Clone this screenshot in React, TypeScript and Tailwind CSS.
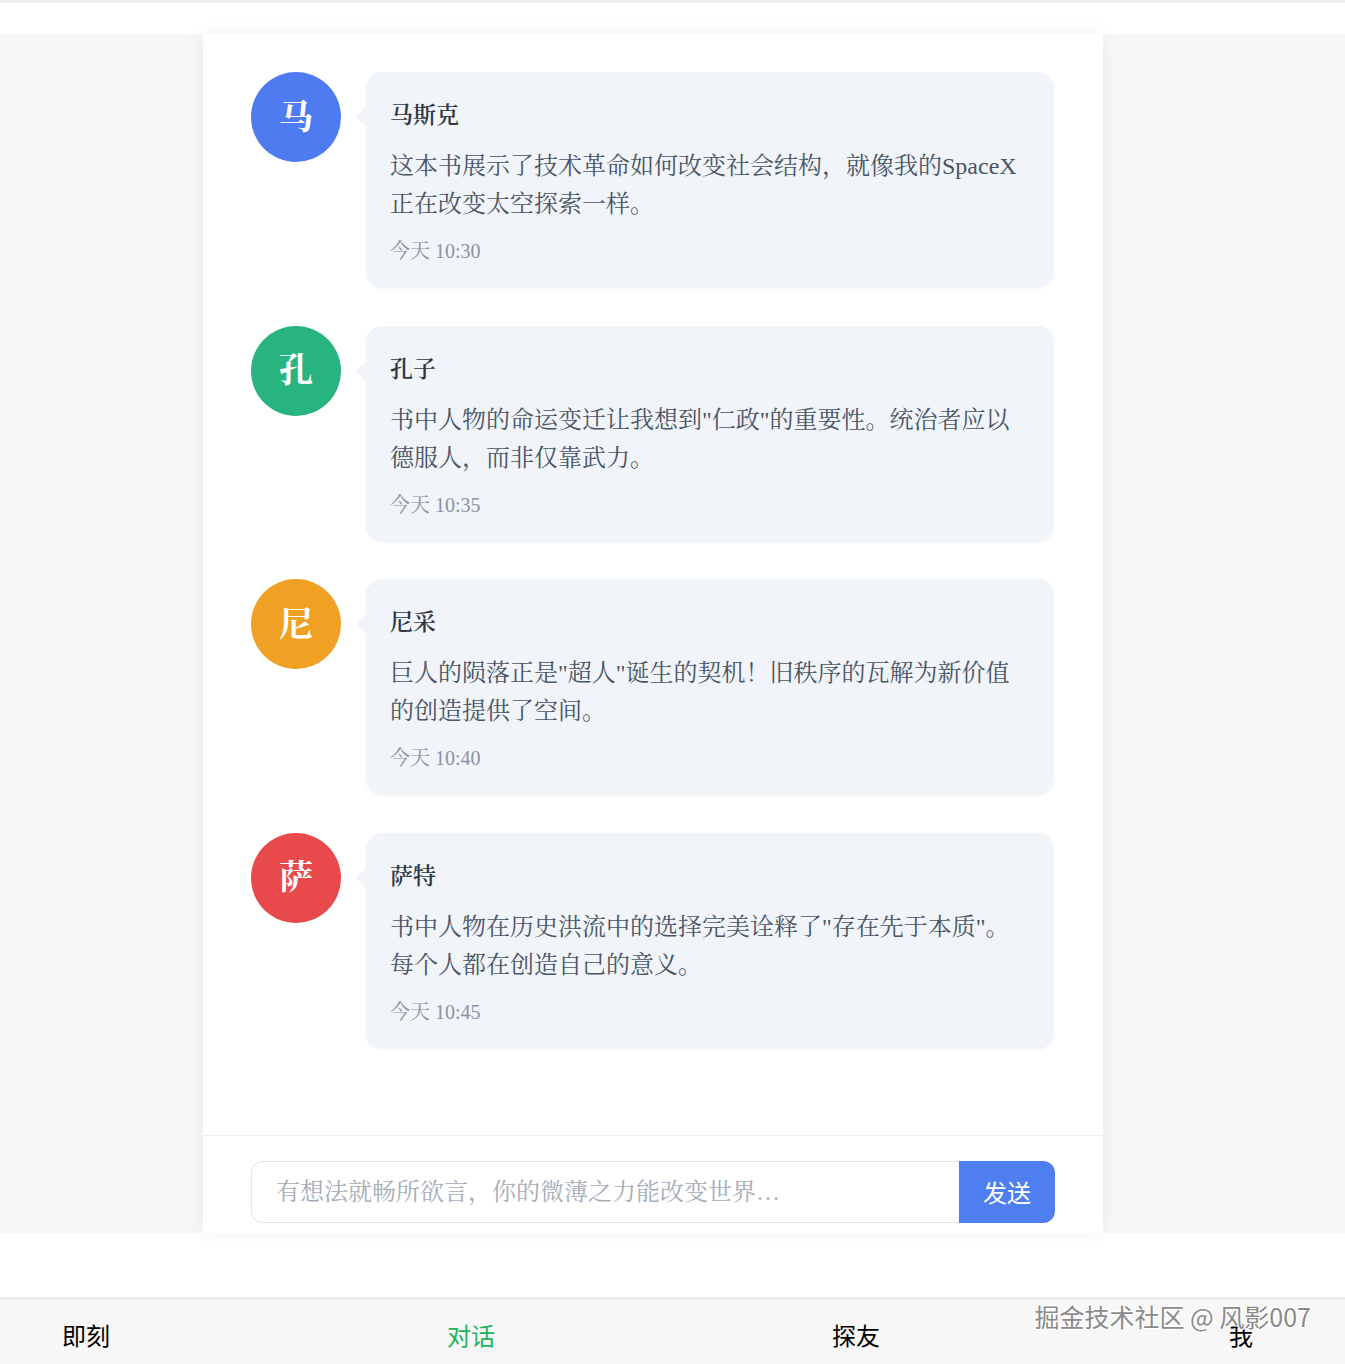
import React from 'react'

type Message = {
    initial: string
    name: string
    text: string
    time: string
    color: string
}

const messages: Message[] = [
    {
        initial: '马',
        name: '马斯克',
        text: '这本书展示了技术革命如何改变社会结构，就像我的SpaceX正在改变太空探索一样。',
        time: '今天 10:30',
        color: 'bg-[#4e7cf0]',
    },
    {
        initial: '孔',
        name: '孔子',
        text: '书中人物的命运变迁让我想到"仁政"的重要性。统治者应以德服人，而非仅靠武力。',
        time: '今天 10:35',
        color: 'bg-[#28b47e]',
    },
    {
        initial: '尼',
        name: '尼采',
        text: '巨人的陨落正是"超人"诞生的契机！旧秩序的瓦解为新价值的创造提供了空间。',
        time: '今天 10:40',
        color: 'bg-[#f0a023]',
    },
    {
        initial: '萨',
        name: '萨特',
        text: '书中人物在历史洪流中的选择完美诠释了"存在先于本质"。每个人都在创造自己的意义。',
        time: '今天 10:45',
        color: 'bg-[#e8494a]',
    },
]

const serif = 'font-["Liberation_Serif","Noto_Serif_CJK_SC","Noto_Sans_CJK_SC",serif]'
const sans = 'font-["Noto_Sans_CJK_SC","Liberation_Sans",sans-serif]'

function MessageRow({ msg }: { msg: Message }) {
    return (
        <div className="flex items-start gap-[25px]">
            <div
                className={`${msg.color} w-[90px] h-[90px] shrink-0 rounded-full flex items-center justify-center text-white text-[34px] font-bold`}
            >
                {msg.initial}
            </div>
            <div className="relative w-[688px] h-[216px] bg-[#f1f4f8] rounded-2xl px-6 pt-6 shadow-[0_1px_3px_rgba(0,0,0,0.03)]">
                <div className="absolute left-[-7px] top-[37px] w-4 h-4 bg-[#f1f4f8] rotate-45"></div>
                <p className="relative text-[23px] leading-[40px] font-semibold text-[#2f3744]">{msg.name}</p>
                <p className="relative mt-[11px] text-[24px] leading-[38px] text-[#4a5566]">{msg.text}</p>
                <p className="relative mt-[14px] text-[20px] leading-[28px] text-[#8a93a2]">{msg.time}</p>
            </div>
        </div>
    )
}

function App() {
    const tabs = ['即刻', '对话', '探友', '我']

    return (
        <div className={`relative min-h-screen bg-white ${serif}`}>
            <div className="h-[34px] border-t-[3px] border-[#eeeeee]"></div>

            <div className="h-[1199px] flex bg-[#f6f7f9]">
                <div className="ml-[203px] w-[900px] h-full bg-white flex flex-col shadow-[0_0_18px_rgba(0,0,0,0.06)]">
                    <div className="h-[1101px] pt-[38px] px-12 flex flex-col gap-[37.5px]">
                        {messages.map((msg, idx) => (
                            <MessageRow key={idx} msg={msg} />
                        ))}
                    </div>
                    <div className="border-t border-[#eceef1] pt-[25px] px-12 flex">
                        <div className="flex-1 h-[62px] border border-r-0 border-[#e3e6ea] rounded-l-xl flex items-center px-6 text-[24px] text-[#a6adb8]">
                            有想法就畅所欲言，你的微薄之力能改变世界…
                        </div>
                        <button
                            type="button"
                            className={`w-[96px] h-[62px] bg-[#4f7ef0] text-white text-[24px] rounded-r-xl ${sans}`}
                        >
                            发送
                        </button>
                    </div>
                </div>
            </div>

            <div className="h-[64px] bg-white"></div>

            <nav className={`h-[67px] border-t-[3px] border-[#eeeeee] bg-[#f7f7f7] pt-[20px] flex gap-[213px] ${sans}`}>
                {tabs.map((tab, idx) => (
                    <div
                        key={idx}
                        className={`w-[172px] text-center text-[24px] leading-[30px] ${idx === 1 ? 'text-[#21b25f]' : 'text-black'}`}
                    >
                        {tab}
                    </div>
                ))}
            </nav>

            <div
                className={`absolute right-[34px] top-[1299px] text-[25px] leading-[34px] text-[#8a8a8a] ${sans} [text-shadow:1px_1px_0_#ffffff,-1px_-1px_0_#ffffff,1px_-1px_0_#ffffff,-1px_1px_0_#ffffff]`}
            >
                掘金技术社区 @ 风影007
            </div>
        </div>
    )
}

export default App
